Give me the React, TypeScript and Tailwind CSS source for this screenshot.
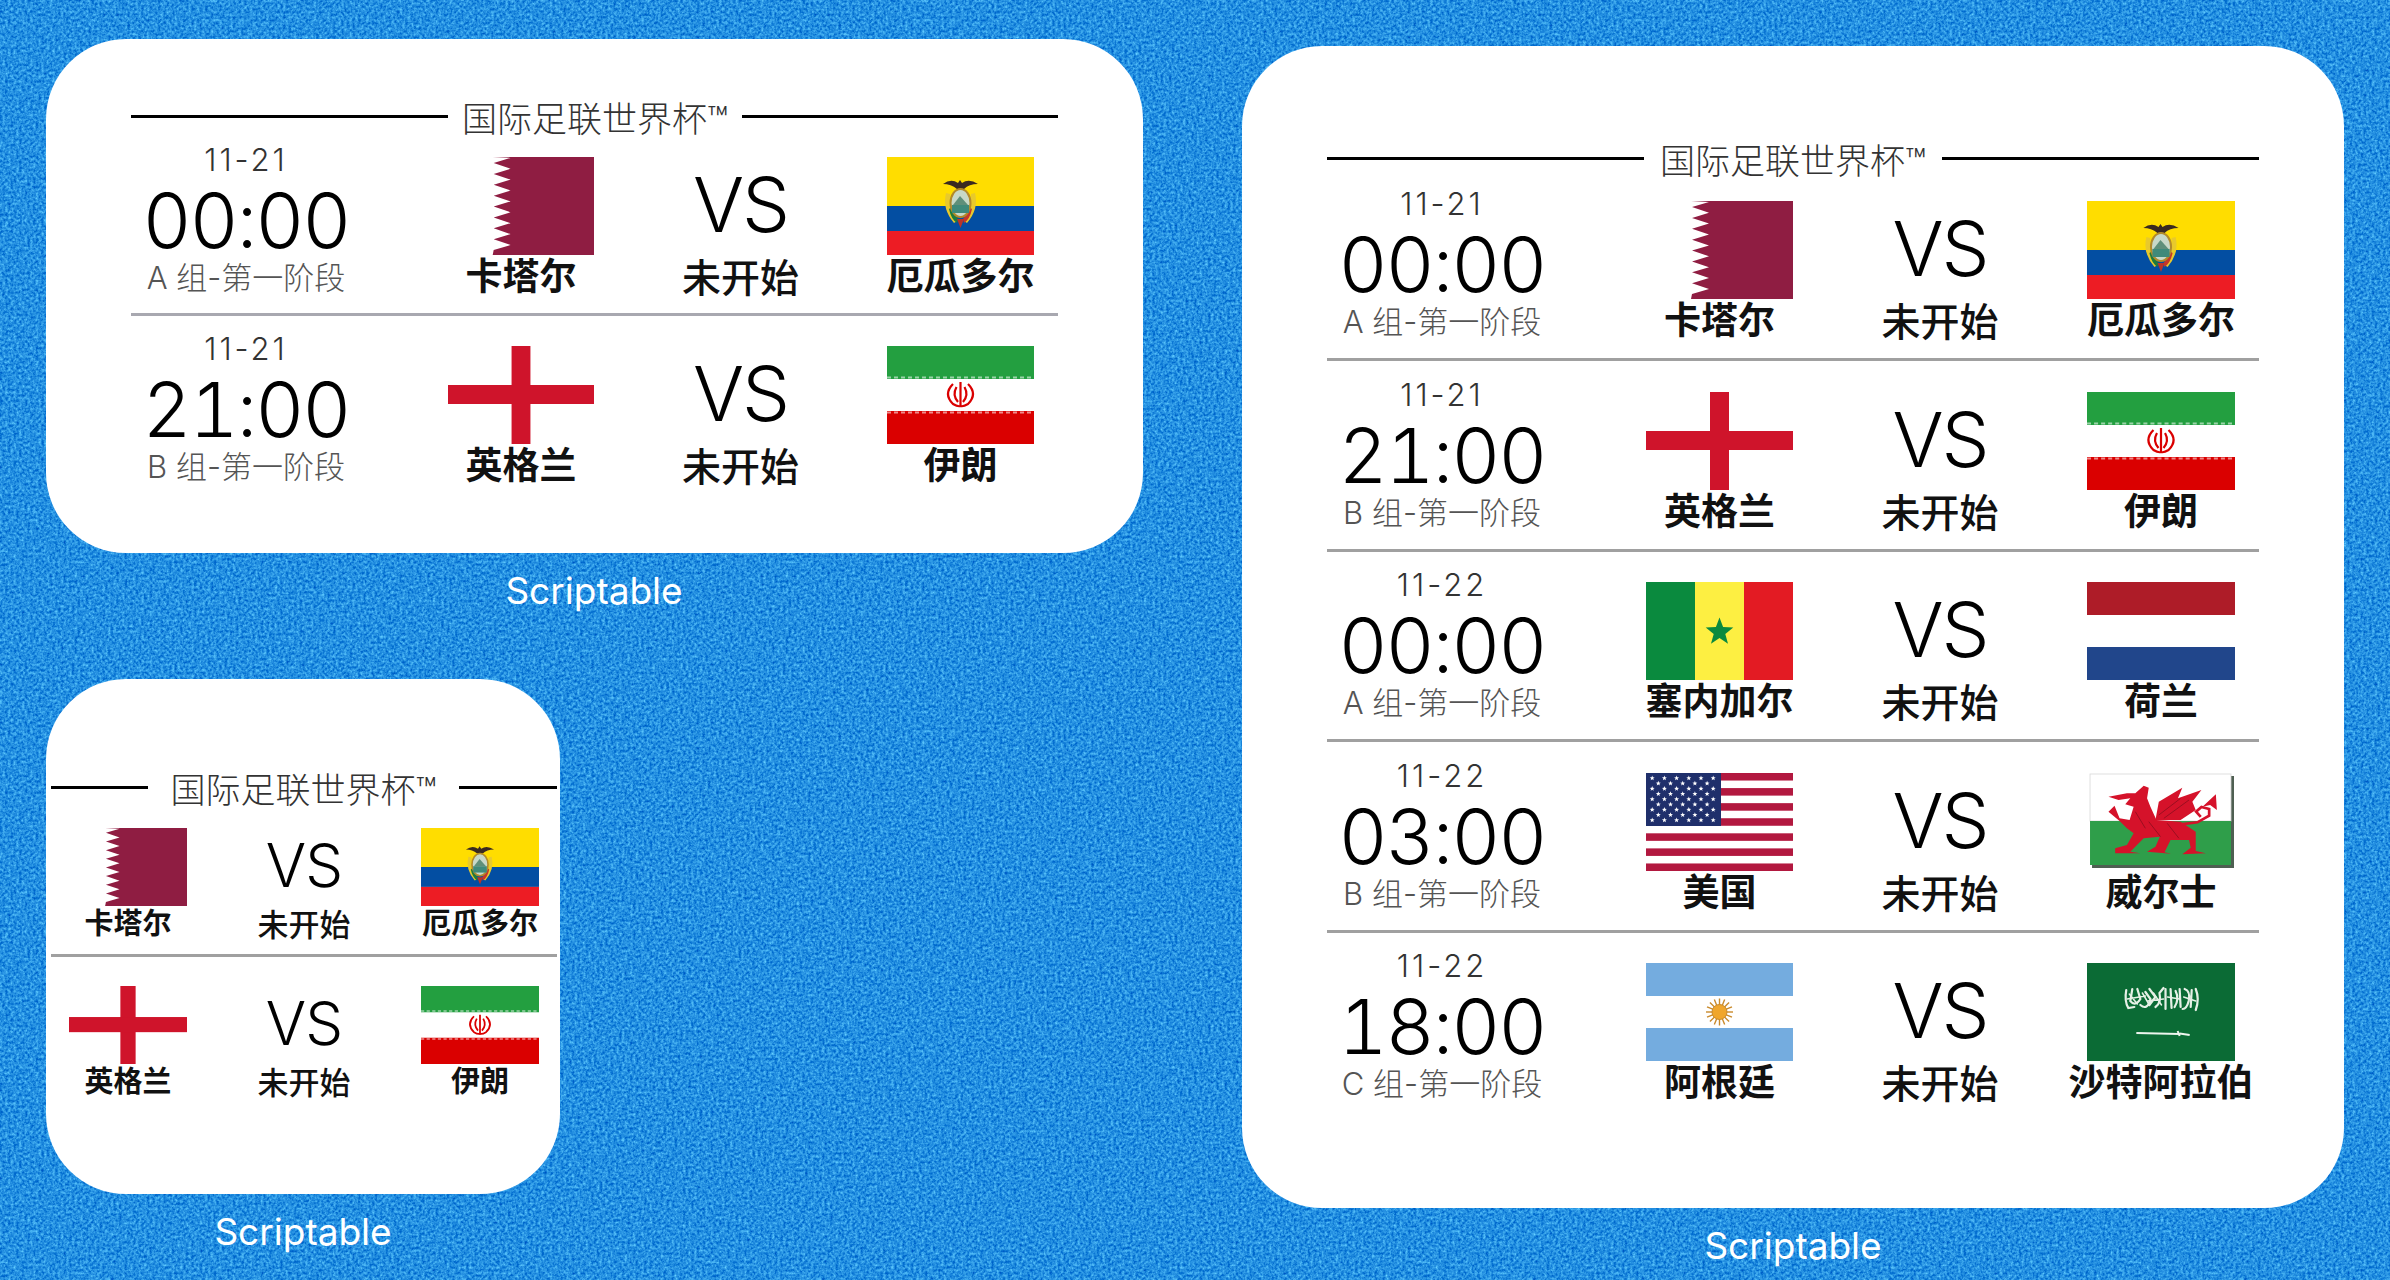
const cjk = "font-['Inter','Noto_Sans_CJK_SC',sans-serif]";

type FlagCode =
  | "qatar"
  | "ecuador"
  | "england"
  | "iran"
  | "senegal"
  | "netherlands"
  | "usa"
  | "wales"
  | "argentina"
  | "saudi";

interface MatchData {
  date: string;
  time: string;
  group: string;
  home: string;
  homeFlag: FlagCode;
  away: string;
  awayFlag: FlagCode;
}

const matches: MatchData[] = [
  { date: "11-21", time: "00:00", group: "A 组-第一阶段", home: "卡塔尔", homeFlag: "qatar", away: "厄瓜多尔", awayFlag: "ecuador" },
  { date: "11-21", time: "21:00", group: "B 组-第一阶段", home: "英格兰", homeFlag: "england", away: "伊朗", awayFlag: "iran" },
  { date: "11-22", time: "00:00", group: "A 组-第一阶段", home: "塞内加尔", homeFlag: "senegal", away: "荷兰", awayFlag: "netherlands" },
  { date: "11-22", time: "03:00", group: "B 组-第一阶段", home: "美国", homeFlag: "usa", away: "威尔士", awayFlag: "wales" },
  { date: "11-22", time: "18:00", group: "C 组-第一阶段", home: "阿根廷", homeFlag: "argentina", away: "沙特阿拉伯", awayFlag: "saudi" },
];

const qatarPoints = (() => {
  const pts = ["147,0", "45,0"];
  for (let i = 0; i < 9; i++) {
    const h = 98 / 9;
    pts.push(`63,${(i * h + h * 0.08).toFixed(1)}`);
    pts.push(`46,${(i * h + h * 0.55).toFixed(1)}`);
  }
  pts.push("45,98", "147,98");
  return pts.join(" ");
})();

const starPath = (cx: number, cy: number, r: number) => {
  const pts: string[] = [];
  for (let i = 0; i < 10; i++) {
    const rad = i % 2 ? r * 0.42 : r;
    const a = -Math.PI / 2 + (i * Math.PI) / 5;
    pts.push(`${(cx + rad * Math.cos(a)).toFixed(2)},${(cy + rad * Math.sin(a)).toFixed(2)}`);
  }
  return pts.join(" ");
};

const usaStars = (() => {
  const out: [number, number][] = [];
  for (let row = 0; row < 9; row++) {
    const odd = row % 2 === 1;
    const count = odd ? 5 : 6;
    for (let c = 0; c < count; c++) {
      out.push([6.2 + (odd ? 6.1 : 0) + c * 12.2, 5.2 + row * 5.25]);
    }
  }
  return out;
})();

function Flag({ code }: { code: FlagCode }) {
  return (
    <svg viewBox="0 0 147 98" preserveAspectRatio="none" className="block h-full w-full">
      {code === "qatar" && <polygon points={qatarPoints} fill="#8f1d42" />}

      {code === "england" && (
        <>
          <rect x="64" y="0" width="19" height="98" fill="#cf142b" />
          <rect x="0" y="39" width="147" height="19" fill="#cf142b" />
        </>
      )}

      {code === "ecuador" && (
        <>
          <rect width="147" height="49" fill="#ffdd00" />
          <rect y="49" width="147" height="25" fill="#034ea2" />
          <rect y="74" width="147" height="24" fill="#ed1c24" />
          <path d="M56 27 Q64 21 71 26 L73 23 L75 26 Q82 21 91 27 Q82 27 77 32 L70 32 Q64 27 56 27Z" fill="#3a2a20" />
          <path d="M59 36 Q55 52 67 66 L70 64 Q62 52 63 37Z" fill="#e8c92c" />
          <path d="M88 36 Q92 52 80 66 L77 64 Q85 52 84 37Z" fill="#e8c92c" />
          <path d="M62 52 Q64 62 70 66 L71 62 Q66 57 65 50Z" fill="#1e7a3c" />
          <path d="M85 52 Q83 62 77 66 L76 62 Q81 57 82 50Z" fill="#c5362a" />
          <ellipse cx="73.5" cy="46" rx="10" ry="14" fill="#c8d8c8" stroke="#b28a2a" strokeWidth="2" />
          <rect x="65" y="48" width="17" height="8" fill="#3f8a7a" />
          <path d="M66 48 L73 39 L81 48Z" fill="#5f8f7a" />
          <path d="M70 62 L73.5 71 L77 62Z" fill="#b8342a" />
        </>
      )}

      {code === "iran" && (
        <>
          <rect width="147" height="33" fill="#239f40" />
          <rect y="65" width="147" height="33" fill="#da0000" />
          <line x1="0" y1="31.5" x2="147" y2="31.5" stroke="#fff" strokeWidth="2" strokeDasharray="4 3" opacity="0.55" />
          <line x1="0" y1="66.5" x2="147" y2="66.5" stroke="#fff" strokeWidth="2" strokeDasharray="4 3" opacity="0.55" />
          <g fill="none" stroke="#da0000" strokeWidth="2.2">
            <path d="M66 38 Q56 48 66 58 Q71 61 73.5 60" />
            <path d="M81 38 Q91 48 81 58 Q76 61 73.5 60" />
            <path d="M69.5 41 Q65 49 71 56" />
            <path d="M77.5 41 Q82 49 76 56" />
            <path d="M73.5 36 L73.5 61" />
          </g>
        </>
      )}

      {code === "senegal" && (
        <>
          <rect width="49" height="98" fill="#0a8a3e" />
          <rect x="49" width="49" height="98" fill="#fdef42" />
          <rect x="98" width="49" height="98" fill="#e31b23" />
          <polygon points={starPath(73.5, 50, 14.5)} fill="#0a8a3e" />
        </>
      )}

      {code === "netherlands" && (
        <>
          <rect width="147" height="33" fill="#ae1c28" />
          <rect y="65" width="147" height="33" fill="#21468b" />
        </>
      )}

      {code === "usa" && (
        <>
          {[0, 2, 4, 6, 8, 10, 12].map((i) => (
            <rect key={i} y={(i * 98) / 13} width="147" height={98 / 13} fill="#b2183f" />
          ))}
          <rect width="75" height="53" fill="#1f2f6b" />
          {usaStars.map(([x, y]) => (
            <polygon key={`${x}-${y}`} points={starPath(x, y, 2.6)} fill="#fff" />
          ))}
        </>
      )}

      {code === "wales" && (
        <>
          <rect x="5" y="3" width="141" height="92" fill="#4f5f52" />
          <rect x="3" y="1" width="140" height="47" fill="#fff" stroke="#d8d8d8" strokeWidth="0.8" />
          <rect x="3" y="48" width="140" height="44" fill="#2f9e4a" />
          <g transform="translate(-7 -8) scale(0.3333)" fill="#d5122a">
            <polygon points="85,95 140,85 165,85 190,62 205,68 200,100 210,125 228,165 300,170 345,200 345,258 375,265 305,268 330,248 325,225 270,225 252,262 272,266 200,260 225,245 238,215 190,220 150,260 180,265 105,265 105,250 140,240 160,205 140,190 118,168 85,140 103,122 118,160 148,165 160,125 135,118 150,100 115,105" />
            <polygon points="225,165 235,110 305,68 292,100 362,75 335,110 345,135 300,165" />
            <polyline points="300,178 350,172 385,152 385,132 362,126 346,140 360,156" fill="none" stroke="#d5122a" strokeWidth="8" />
            <polygon points="365,125 405,88 408,135 388,120" />
            <g fill="none" stroke="#8e0d1e" strokeWidth="2.5">
              <path d="M235 150 L300 100 M250 160 L325 105 M205 170 L240 215 M260 175 L295 220 M165 140 L195 190" />
            </g>
          </g>
        </>
      )}

      {code === "argentina" && (
        <>
          <rect width="147" height="33" fill="#74acdf" />
          <rect y="65" width="147" height="33" fill="#74acdf" />
          <g stroke="#c98a2b" strokeWidth="1.4">
            {Array.from({ length: 16 }).map((_, i) => {
              const a = (i * Math.PI) / 8;
              return (
                <line
                  key={i}
                  x1={73.5 + 6 * Math.cos(a)}
                  y1={49 + 6 * Math.sin(a)}
                  x2={73.5 + 13.5 * Math.cos(a)}
                  y2={49 + 13.5 * Math.sin(a)}
                />
              );
            })}
          </g>
          <circle cx="73.5" cy="49" r="7.5" fill="#f0a62c" stroke="#c98a2b" strokeWidth="1" />
        </>
      )}

      {code === "saudi" && (
        <>
          <rect width="147" height="98" fill="#0b6b35" />
          <g fill="none" stroke="#e6f0e6" strokeWidth="2.2" strokeLinecap="round">
            <path d="M39 27 Q37 38 41 45 L47 44 M45 26 L43 38 Q48 44 53 36 L50 26 M53 42 Q60 48 63 36 L58 29 M62 26 L68 34 L62 42 M68 44 Q74 40 72 30 L76 25 M78 26 L78 46 M83 26 L84 45 M88 28 Q92 36 87 44 M92 26 L93 44 M97 26 Q103 28 101 38 Q99 46 95 46 M104 27 L103 44 M108 26 Q112 36 108 47" />
            <path d="M40 36 L58 33 M60 38 L76 36 M42 31 L50 41 M55 30 L62 42 M66 30 L74 42 M80 34 L92 36 M96 34 L108 38" strokeWidth="1.5" />
          </g>
          <path d="M49 70 L92 71" stroke="#eef5ee" strokeWidth="1.8" />
          <path d="M90 68 L92 73 M92 70.5 L102 72" stroke="#eef5ee" strokeWidth="2" />
        </>
      )}
    </svg>
  );
}

function TeamCell({ name, flag, size }: { name: string; flag: FlagCode; size: "w-[146px]" | "w-[147px]" | "w-[148px]" }) {
  return (
    <div className={`flex shrink-0 flex-col items-center pt-[15px] ${size}`}>
      <div className="h-[98px] w-full">
        <Flag code={flag} />
      </div>
      <p className="whitespace-nowrap text-[37px] leading-[44px] font-semibold text-[#111]">{name}</p>
    </div>
  );
}

function TimeCell({ match }: { match: MatchData }) {
  return (
    <div className="flex w-[230px] shrink-0 flex-col items-center">
      <p className="text-[31px] leading-[36px] font-light tracking-[3px] text-[#333]">{match.date}</p>
      <p className="mt-[4px] text-[76px] leading-[76px] font-light tracking-[-2px] text-black tabular-nums">{match.time}</p>
      <p className="text-[31px] leading-[39px] font-light text-[#555]">{match.group}</p>
    </div>
  );
}

function VsCell({ className }: { className: string }) {
  return (
    <div className={`flex shrink-0 flex-col items-center pt-[24px] ${className}`}>
      <p className="text-[76px] leading-[76px] font-light tracking-[-2px] text-black">VS</p>
      <p className="mt-[14px] text-[39px] leading-[44px] font-medium text-[#111]">未开始</p>
    </div>
  );
}

function Title({ leftLine, rightLine }: { leftLine: string; rightLine: string }) {
  return (
    <div className="flex h-[50px] items-center justify-between">
      <div className={`h-[3px] bg-black ${leftLine}`} />
      <p className="whitespace-nowrap pt-[5px] text-[35px] leading-[50px] font-light text-[#333]">国际足联世界杯™</p>
      <div className={`h-[3px] bg-black ${rightLine}`} />
    </div>
  );
}

function MediumWidget() {
  return (
    <div className="h-[514px] w-[1097px] rounded-[80px] bg-white pt-[52px] pr-[85px] pl-[85px]">
      <Title leftLine="w-[317px]" rightLine="w-[316px]" />
      <div className="mt-px">
        {matches.slice(0, 2).map((m, i) => (
          <div key={m.time + i}>
            <div className="flex h-[171px]">
              <TimeCell match={m} />
              <div className="w-[87px] shrink-0" />
              <TeamCell name={m.home} flag={m.homeFlag} size="w-[146px]" />
              <VsCell className="w-[293px]" />
              <TeamCell name={m.away} flag={m.awayFlag} size="w-[147px]" />
            </div>
            {i === 0 && <div className="mb-[15px] h-[3px] bg-[#a8a8b0]" />}
          </div>
        ))}
      </div>
    </div>
  );
}

function LargeWidget() {
  return (
    <div className="ml-[100px] h-[1162px] w-[1102px] rounded-[80px] bg-white px-[85px] pt-[87px]">
      <Title leftLine="w-[317px]" rightLine="w-[317px]" />
      <div className="mt-[3px]">
        {matches.map((m, i) => (
          <div key={m.date + m.time}>
            <div className="flex h-[172px]">
              <TimeCell match={m} />
              <div className="w-[89px] shrink-0" />
              <TeamCell name={m.home} flag={m.homeFlag} size="w-[147px]" />
              <VsCell className="w-[294px]" />
              <TeamCell name={m.away} flag={m.awayFlag} size="w-[148px]" />
            </div>
            {i < matches.length - 1 && <div className="mb-[15.5px] h-[3px] bg-[#a0a0a0]" />}
          </div>
        ))}
      </div>
    </div>
  );
}

function SmallWidget() {
  return (
    <div className="mt-[67px] h-[515px] w-[514px] rounded-[80px] bg-white pt-[83px] pr-[3px] pl-[5px]">
      <Title leftLine="w-[97px]" rightLine="w-[98px]" />
      <div className="mt-[16px]">
        {matches.slice(0, 2).map((m, i) => (
          <div key={m.time + i}>
            <div className="flex h-[126px] pl-[18px]">
              <div className="flex w-[118px] shrink-0 flex-col items-center">
                <div className="h-[78px] w-full">
                  <Flag code={m.homeFlag} />
                </div>
                <p className="whitespace-nowrap text-[29px] leading-[36px] font-semibold text-[#111]">{m.home}</p>
              </div>
              <div className="flex w-[234px] shrink-0 flex-col items-center pt-[7px]">
                <p className="text-[60px] leading-[60px] font-light tracking-[-1px] text-black">VS</p>
                <p className="mt-[10px] text-[31px] leading-[40px] font-medium text-[#111]">未开始</p>
              </div>
              <div className="flex w-[118px] shrink-0 flex-col items-center">
                <div className="h-[78px] w-full">
                  <Flag code={m.awayFlag} />
                </div>
                <p className="whitespace-nowrap text-[29px] leading-[36px] font-semibold text-[#111]">{m.away}</p>
              </div>
            </div>
            {i === 0 && <div className="mb-[29px] h-[3px] bg-[#a0a0a0]" />}
          </div>
        ))}
      </div>
    </div>
  );
}

function WidgetLabel() {
  return <p className="mt-[17px] text-center text-[37px] leading-[42px] text-white">Scriptable</p>;
}

export default function App() {
  return (
    <div className={`relative flex h-[1280px] w-[2390px] overflow-hidden bg-[#2089de] pt-[39px] pl-[46px] ${cjk}`}>
      {/* wallpaper grain */}
      <svg className="absolute inset-0 h-full w-full" aria-hidden="true">
        <filter id="grain" x="0" y="0" width="100%" height="100%" colorInterpolationFilters="sRGB">
          <feTurbulence type="fractalNoise" baseFrequency="0.36" numOctaves="3" seed="4" />
          <feColorMatrix values="0.6 0 0 0 -0.16  0.6 0 0 0 0.26  0.3 0 0 0 0.73  0 0 0 0 1" />
          <feGaussianBlur stdDeviation="0.5" />
        </filter>
        <rect width="100%" height="100%" filter="url(#grain)" />
      </svg>

      <div className="relative w-[1096px] shrink-0">
        <MediumWidget />
        <WidgetLabel />
        <SmallWidget />
        <div className="w-[514px]">
          <WidgetLabel />
        </div>
      </div>

      <div className="relative mt-[7px]">
        <LargeWidget />
        <div className="ml-[100px] w-[1102px]">
          <WidgetLabel />
        </div>
      </div>
    </div>
  );
}
